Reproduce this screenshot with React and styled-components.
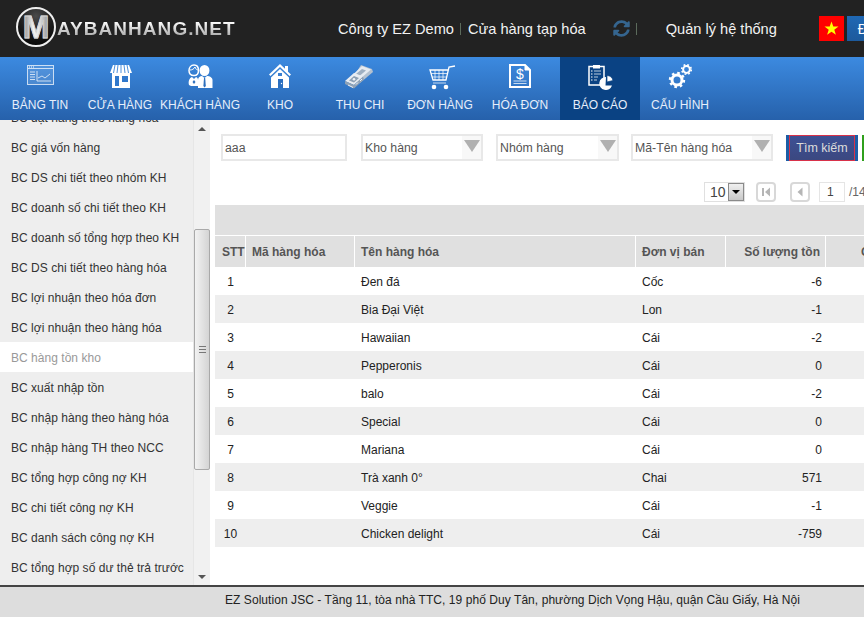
import React from 'react';
import styled, { createGlobalStyle } from 'styled-components';
import { FaSyncAlt } from 'react-icons/fa';

const GlobalStyle = createGlobalStyle`
  html, body {
    margin: 0;
    height: 100%;
    overflow: hidden;
    background: #fff;
    font-family: "Liberation Sans", Arial, sans-serif;
    font-size: 12px;
  }
`;

const Page = styled.div`
  width: 864px;
  height: 617px;
  display: flex;
  flex-direction: column;
  overflow: hidden;
`;

const Header = styled.header`
  height: 57px;
  flex: none;
  background: #222;
  display: flex;
  align-items: center;
  white-space: nowrap;
`;

const Logo = styled.div`
  width: 338px;
  flex: none;
  display: flex;
  align-items: center;
  padding-left: 16px;
  box-sizing: border-box;
`;

const LogoBadge = styled.span`
  width: 40px;
  height: 40px;
  box-sizing: border-box;
  flex: none;
  margin-bottom: 3px;
  border: 2px solid #eee;
  border-radius: 50%;
  background: radial-gradient(circle at 50% 20%, #4a4a4a 0%, #1c1c1c 50%, #000 100%);
  display: flex;
  align-items: center;
  justify-content: center;
  font-size: 32px;
  font-weight: bold;
`;

const LogoBadgeLetter = styled.span`
  background: linear-gradient(90deg, #8a8a8a 0%, #f2f2f2 40%, #e6e6e6 60%, #8f8f8f 100%);
  -webkit-background-clip: text;
  background-clip: text;
  color: transparent;
  -webkit-text-stroke: 0.8px #d4d4d4;
`;

const LogoText = styled.span`
  margin-left: 1px;
  font-size: 19px;
  font-weight: bold;
  letter-spacing: 1.05px;
  background: linear-gradient(180deg, #fafafa 20%, #a8a8a8 85%);
  -webkit-background-clip: text;
  background-clip: text;
  color: transparent;
`;

const TopLink = styled.span`
  flex: none;
  font-size: 14.6px;
  color: #f2f2f2;
  margin-left: ${props => props.$left || 0}px;
`;

const TopDivider = styled.span`
  flex: none;
  width: 1px;
  height: 12px;
  background: #5c6b5c;
  margin-left: ${props => props.$left}px;
`;

const SyncIcon = styled(FaSyncAlt)`
  color: #35658f;
  font-size: 17px;
  margin-left: 27px;
  flex: none;
`;

const Flag = styled.svg`
  width: 25px;
  height: 25px;
  flex: none;
  margin-left: 42px;
`;

const LogoutButton = styled.button`
  width: 80px;
  height: 25px;
  flex: none;
  margin-left: 3px;
  border: none;
  padding: 0 0 0 11px;
  text-align: left;
  color: #fff;
  font: 14px "Liberation Sans", Arial, sans-serif;
  background: linear-gradient(180deg, #1f68b4, #1d5a9c);
`;

const Nav = styled.nav`
  height: 63px;
  flex: none;
  display: flex;
  background: linear-gradient(180deg, #3c8ae0 0%, #2661ab 100%);
`;

const NavItem = styled.div`
  width: 80px;
  flex: none;
  padding-top: 5px;
  box-sizing: border-box;
  display: flex;
  flex-direction: column;
  align-items: center;
  gap: 8px;
  background: ${props => props.$active ? '#0a4283' : 'transparent'};
`;

const NavIcon = styled.svg`
  width: 32px;
  height: 28px;
  flex: none;
`;

const NavLabel = styled.span`
  font-size: 12px;
  line-height: 14px;
  color: #e6eefa;
  white-space: nowrap;
`;

const Body = styled.div`
  flex: 1;
  min-height: 0;
  display: flex;
`;

const Sidebar = styled.aside`
  width: 193px;
  flex: none;
  background: #eee;
  overflow: hidden;
`;

const SideList = styled.ul`
  list-style: none;
  margin: -18px 0 0;
  padding: 0;
`;

const SideRow = styled.li`
  height: 30px;
  line-height: 32px;
  padding-left: 11px;
  white-space: nowrap;
  letter-spacing: 0.03px;
  color: ${props => props.$active ? '#999' : '#333'};
  background: ${props => props.$active ? '#fff' : 'transparent'};
`;

const ScrollTrack = styled.div`
  width: 17px;
  flex: none;
  display: flex;
  flex-direction: column;
  background: #f1f1f1;
  border-left: 1px solid #e6e6e6;
  box-sizing: border-box;
`;

const ScrollArrow = styled.div`
  height: 17px;
  flex: none;
  display: flex;
  align-items: center;
  justify-content: center;
  margin-top: ${props => props.$bottom ? 'auto' : '0'};

  &::before {
    content: '';
    border-left: 4px solid transparent;
    border-right: 4px solid transparent;
    ${props => props.$bottom ? 'border-top: 4px solid #555;' : 'border-bottom: 4px solid #555;'}
  }
`;

const ScrollThumb = styled.div`
  height: 241px;
  flex: none;
  margin-top: 92px;
  box-sizing: border-box;
  border: 1px solid #a9a9a9;
  border-radius: 2px;
  background: linear-gradient(90deg, #f2f2f2, #d4d4d4);
  display: flex;
  align-items: center;
  justify-content: center;
`;

const ScrollGrip = styled.div`
  width: 7px;
  height: 5px;
  border-top: 1px solid #777;
  border-bottom: 1px solid #777;
  position: relative;

  &::after {
    content: '';
    position: absolute;
    left: 0;
    right: 0;
    top: 2px;
    height: 1px;
    background: #777;
  }
`;

const Main = styled.main`
  flex: 1;
  min-width: 0;
  margin-left: 5px;
  overflow: hidden;
`;

const Filters = styled.div`
  display: flex;
  align-items: flex-start;
  height: 62px;
  padding: 14px 0 0 6px;
  box-sizing: border-box;
  width: 700px;
`;

const Field = styled.div`
  width: ${props => props.$width}px;
  height: 27px;
  margin-right: ${props => props.$gap}px;
  flex: none;
  box-sizing: border-box;
  border: 2px solid #e8e8e8;
  display: flex;
  align-items: center;
  padding-left: 2px;
  color: #555;
  font-size: 12.3px;
  background: #fff;
  position: relative;
`;

const FieldArrow = styled.span`
  position: absolute;
  right: 0;
  top: 0;
  bottom: 0;
  width: 19px;
  background: #f8f8f8;

  &::after {
    content: '';
    position: absolute;
    top: 4px;
    left: 2px;
    border-left: 8px solid transparent;
    border-right: 8px solid transparent;
    border-top: 12px solid #b0b0b0;
  }
`;

const SearchWrap = styled.div`
  width: 72px;
  height: 26px;
  flex: none;
  margin-top: 1px;
  box-sizing: border-box;
  padding: 0 3px;
  background: #1c5da6;
`;

const SearchButton = styled.button`
  width: 100%;
  height: 100%;
  padding: 0;
  box-sizing: border-box;
  border: 1px solid #d8324a;
  background: linear-gradient(180deg, #3d5095, #3b4880);
  color: #dcdcdc;
  font: 12.5px "Liberation Sans", Arial, sans-serif;
`;

const ExportButton = styled.button`
  width: 60px;
  height: 26px;
  flex: none;
  margin: 1px 0 0 4px;
  border: none;
  background: #2fa01c;
`;

const Pager = styled.div`
  display: flex;
  align-items: center;
  height: 20px;
  margin-bottom: 3px;
  margin-left: 489px;
  width: 300px;
  color: #666;
`;

const PageSize = styled.div`
  width: 41px;
  height: 20px;
  flex: none;
  box-sizing: border-box;
  border: 1px solid #e0e0e0;
  display: flex;
  align-items: center;
  justify-content: space-between;
  padding-left: 5px;
  font-size: 14px;
  color: #444;
`;

const PageSizeArrow = styled.span`
  width: 16px;
  height: 18px;
  box-sizing: border-box;
  border: 1px solid #8a8a8a;
  background: linear-gradient(180deg, #f0f0f0, #c8c8c8);
  display: flex;
  align-items: center;
  justify-content: center;

  &::after {
    content: '';
    border-left: 4px solid transparent;
    border-right: 4px solid transparent;
    border-top: 4px solid #000;
  }
`;

const PageButton = styled.span`
  width: 20px;
  height: 20px;
  flex: none;
  box-sizing: border-box;
  margin-left: ${props => props.$left}px;
  border: 2px solid #d8d8d8;
  border-radius: 4px;
  display: flex;
  align-items: center;
  justify-content: center;
  background: #fff;
`;

const PageInput = styled.span`
  width: 26px;
  height: 20px;
  flex: none;
  box-sizing: border-box;
  margin-left: 9px;
  border: 1px solid #e5e5e5;
  padding-left: 7px;
  line-height: 18px;
  color: #444;
`;

const PageTotal = styled.span`
  margin-left: 4px;
`;

const Table = styled.table`
  width: 800px;
  table-layout: fixed;
  border-collapse: separate;
  border-spacing: 0;
`;

const Band = styled.th`
  height: 30px;
  padding: 0;
  background: #e0e0e0;
  border-bottom: 1px solid #fff;
`;

const Th = styled.th`
  height: 31px;
  padding: 1px ${props => props.$right ? '5px' : '6px'} 0 ${props => props.$left ?? 6}px;
  box-sizing: border-box;
  background: #e0e0e0;
  border-right: 1px solid #fff;
  color: #555;
  font-size: 12px;
  font-weight: bold;
  white-space: nowrap;
  text-align: ${props => props.$align || 'left'};
`;

const Tr = styled.tr`
  background: ${props => props.$even ? '#eee' : '#fff'};
`;

const Td = styled.td`
  height: 28px;
  padding: 2px ${props => props.$right ? '4px' : '6px'} 0 6px;
  box-sizing: border-box;
  color: #222;
  white-space: nowrap;
  text-align: left;
`;

const NumberTd = styled(Td)`
  text-align: right;
  padding-left: 0;
`;

const IndexTd = styled(Td)`
  text-align: center;
  padding-left: 0;
  padding-right: 0;
`;

const Footer = styled.footer`
  height: 32px;
  flex: none;
  box-sizing: border-box;
  border-top: 2px solid #444;
  background: #ddd;
  padding-left: 225px;
  line-height: 26px;
  letter-spacing: 0.06px;
  color: #222;
  white-space: nowrap;
`;

const W = '#fff';
const Soft = 'rgba(255,255,255,.72)';

const icons = {
  dashboard: (
    <>
      <rect x="3.5" y="3.5" width="26" height="19" fill="rgba(255,255,255,.12)" stroke={Soft} />
      <path d="M4 6.5h25" stroke={Soft} />
      <path d="M5 5h1M7 5h1M9 5h1" stroke={W} />
      <path d="M6 10h5M6 12.5h5M6 15h5M6 17.5h5" stroke={Soft} strokeWidth="1.2" />
      <path d="M13 9v10M13 19h14M14 16l4-2 3 2 5-4" fill="none" stroke={Soft} />
    </>
  ),
  store: (
    <>
      <path d="M9 3h16l3 8H6z" fill={W} />
      <path d="M11 3l-1.5 8M14 3l-1 8M17 3v8M20 3l1 8M23 3l1.5 8" stroke="#3a84d8" strokeWidth=".9" />
      <path d="M8 11h18v15H8z" fill={W} />
      <path d="M11 14h4v10h-4zM18 14h6v6h-6z" fill="#3078cc" />
    </>
  ),
  people: (
    <>
      <path d="M20.5 3a4.5 5 0 0 1 0 11 4.5 5 0 0 1 0-11zM14 26v-8c0-2.5 2-4 4-4l2.5 2 2.5-2c2.5 0 5.5 1.5 5.5 4v8z" fill={W} />
      <path d="M20 16h1.2l.6 8-1.2 1.5-1.2-1.5z" fill="#2f70bd" />
      <path d="M10 3c3 0 4.5 2.5 4.5 5.5s-1.5 5-4.5 5-5-2-5-5S7 3 10 3z" fill="none" stroke={W} strokeWidth="1.5" />
      <path d="M6 8c2 0 4-1 5-3 .5 2 2 3 3 3" fill="none" stroke={W} />
      <path d="M5 23c-1-3 0-7 3-8l2 2 2-2c1.5.5 2 1.5 2 3v6H7z" fill={W} />
      <path d="M10 18l1.5 2-1.5 2-1.5-2z" fill="#2f70bd" />
    </>
  ),
  house: (
    <>
      <path d="M16 2l5 4.8V4h3v5.700l3 2.900-1.500 1.400L16 5 6.500 14 5 12.600z" fill={W} />
      <path d="M16 7l9 8.500V26H7V15.500z" fill={W} />
      <path d="M14 11h4v3h-4z" fill="#3a7fd0" />
      <path d="M14 17h5v9h-5z" fill="#2b6fc0" />
      <circle cx="17.5" cy="21.5" r=".7" fill={W} />
    </>
  ),
  money: (
    <>
      <path d="M17 3l11 4 1 3-13 11-8-4z" fill="#b4c1cf" />
      <path d="M18 4l9 3.500-11 9.500-8-3.500z" fill="#e6ebf1" />
      <path d="M18 7l4 1.500-6 5-4-1.500z" fill="#9fb0c2" />
      <path d="M1 19l9-8 9 3.500-9 8.500z" fill="#e9edf2" />
      <path d="M5 18.500l5-4.500 5 2-5 4.500z" fill="#8ea1b5" />
      <path d="M1 19l9 4 9-8.500 1 3-10 9-9-4.500z" fill="#8fa2b6" />
      <path d="M4 23l5 2.500M12 22.500l2-2M16 19l2-2" stroke="#eef2f6" />
      <circle cx="10" cy="17.2" r="1.3" fill="#eef2f6" />
    </>
  ),
  cart: (
    <>
      <path d="M31 4l-6 1-3 13H9L6 8h18" fill="none" stroke={W} strokeWidth="1.3" />
      <path d="M7 11.5h16M8 15h14M11 8v10M15 8v10M19 8v10" fill="none" stroke={Soft} />
      <path d="M9 21h13" stroke={Soft} />
      <circle cx="10" cy="25" r="2.3" fill={W} />
      <circle cx="22" cy="25" r="2.3" fill={W} />
    </>
  ),
  invoice: (
    <>
      <path d="M6 3h15l5 5v17H6z" fill="none" stroke={W} strokeWidth="2" />
      <path d="M21 3v5h5" fill={W} stroke={W} />
      <text x="16" y="16.5" textAnchor="middle" fontSize="14" fontFamily="Liberation Sans, sans-serif" fill={W}>$</text>
      <path d="M9.5 19h13M9.5 21.5h13" stroke={Soft} />
    </>
  ),
  report: (
    <>
      <path d="M5 4.5h15V23H5z" fill="#0a4283" stroke={W} strokeWidth="1.5" />
      <path d="M9 3h7v3.5H9z" fill={W} />
      <path d="M7 9h1.5M7 12h1.5M7 15h1.5M7 18h1.5" stroke={W} strokeWidth="1.2" />
      <path d="M10 9h7M10 12h7M10 15h4M10 18h3" stroke={Soft} />
      <path d="M22 15a6.5 6.5 0 1 0 6 8.5h-6.5z" fill={W} />
      <path d="M23 13.5v6.5l6-1.5a6.5 6.5 0 0 0-6-5z" fill={W} stroke="#0a4283" strokeWidth=".7" />
    </>
  ),
  gears: (
    <>
      <circle cx="13" cy="18" r="5" fill="none" stroke={W} strokeWidth="3" />
      <circle cx="13" cy="18" r="7" fill="none" stroke={W} strokeWidth="2.4" strokeDasharray="2.6 2.9" />
      <circle cx="22.5" cy="7.5" r="3.4" fill="none" stroke={W} strokeWidth="2" />
      <circle cx="22.5" cy="7.5" r="4.8" fill="none" stroke={W} strokeWidth="1.6" strokeDasharray="1.8 2" />
    </>
  ),
};

const navItems = [
  ['dashboard', 'BẢNG TIN'],
  ['store', 'CỬA HÀNG'],
  ['people', 'KHÁCH HÀNG'],
  ['house', 'KHO'],
  ['money', 'THU CHI'],
  ['cart', 'ĐƠN HÀNG'],
  ['invoice', 'HÓA ĐƠN'],
  ['report', 'BÁO CÁO'],
  ['gears', 'CẤU HÌNH'],
];

const reports = [
  'BC đặt hàng theo hàng hóa',
  'BC giá vốn hàng',
  'BC DS chi tiết theo nhóm KH',
  'BC doanh số chi tiết theo KH',
  'BC doanh số tổng hợp theo KH',
  'BC DS chi tiết theo hàng hóa',
  'BC lợi nhuận theo hóa đơn',
  'BC lợi nhuận theo hàng hóa',
  'BC hàng tồn kho',
  'BC xuất nhập tồn',
  'BC nhập hàng theo hàng hóa',
  'BC nhập hàng TH theo NCC',
  'BC tổng hợp công nợ KH',
  'BC chi tiết công nợ KH',
  'BC danh sách công nợ KH',
  'BC tổng hợp số dư thẻ trả trước',
];

const rows = [
  ['Đen đá', 'Cốc', '-6'],
  ['Bia Đại Việt', 'Lon', '-1'],
  ['Hawaiian', 'Cái', '-2'],
  ['Pepperonis', 'Cái', '0'],
  ['balo', 'Cái', '-2'],
  ['Special', 'Cái', '0'],
  ['Mariana', 'Cái', '0'],
  ['Trà xanh 0°', 'Chai', '571'],
  ['Veggie', 'Cái', '-1'],
  ['Chicken delight', 'Cái', '-759'],
];

export default function App() {
  return (
    <Page>
      <GlobalStyle />
      <Header>
        <Logo>
          <LogoBadge><LogoBadgeLetter>M</LogoBadgeLetter></LogoBadge>
          <LogoText>AYBANHANG.NET</LogoText>
        </Logo>
        <TopLink>Công ty EZ Demo</TopLink>
        <TopDivider $left={6} />
        <TopLink $left={7}>Cửa hàng tạp hóa</TopLink>
        <SyncIcon />
        <TopDivider $left={6} />
        <TopLink $left={29}>Quản lý hệ thống</TopLink>
        <Flag viewBox="0 0 25 25">
          <rect width="25" height="25" fill="#f00" />
          <path d="M12.5 5.5l1.8 5h5.2l-4.2 3.2 1.6 5.1-4.400-3.100-4.400 3.100 1.600-5.100-4.200-3.200h5.200z" fill="#ff0" />
        </Flag>
        <LogoutButton>Đăng xuất</LogoutButton>
      </Header>
      <Nav>
        {navItems.map(([icon, label]) => (
          <NavItem key={label} $active={label === 'BÁO CÁO'}>
            <NavIcon viewBox="0 0 32 28">{icons[icon]}</NavIcon>
            <NavLabel>{label}</NavLabel>
          </NavItem>
        ))}
      </Nav>
      <Body>
        <Sidebar>
          <SideList>
            {reports.map(name => (
              <SideRow key={name} $active={name === 'BC hàng tồn kho'}>{name}</SideRow>
            ))}
          </SideList>
        </Sidebar>
        <ScrollTrack>
          <ScrollArrow />
          <ScrollThumb><ScrollGrip /></ScrollThumb>
          <ScrollArrow $bottom />
        </ScrollTrack>
        <Main>
          <Filters>
            <Field $width={126} $gap={14}>aaa</Field>
            <Field $width={122} $gap={13}>Kho hàng<FieldArrow /></Field>
            <Field $width={123} $gap={12}>Nhóm hàng<FieldArrow /></Field>
            <Field $width={142} $gap={13}>Mã-Tên hàng hóa<FieldArrow /></Field>
            <SearchWrap><SearchButton>Tìm kiếm</SearchButton></SearchWrap>
            <ExportButton />
          </Filters>
          <Pager>
            <PageSize>10<PageSizeArrow /></PageSize>
            <PageButton $left={11}>
              <svg width="12" height="12" viewBox="0 0 12 12"><path d="M2 2h2v8H2zM10 1.5v9L5 6z" fill="#b5b5b5" /></svg>
            </PageButton>
            <PageButton $left={14}>
              <svg width="12" height="12" viewBox="0 0 12 12"><path d="M8.5 1.5v9L3.5 6z" fill="#b5b5b5" /></svg>
            </PageButton>
            <PageInput>1</PageInput>
            <PageTotal>/14</PageTotal>
          </Pager>
          <Table>
            <colgroup>
              <col width="31" />
              <col width="109" />
              <col width="281" />
              <col width="90" />
              <col width="100" />
              <col width="189" />
            </colgroup>
            <thead>
              <tr><Band colSpan="6" /></tr>
              <tr>
                <Th $left={7}>STT</Th>
                <Th>Mã hàng hóa</Th>
                <Th>Tên hàng hóa</Th>
                <Th>Đơn vị bán</Th>
                <Th $align="right" $right>Số lượng tồn</Th>
                <Th $left={35}>Giá vốn</Th>
              </tr>
            </thead>
            <tbody>
              {rows.map((row, i) => (
                <Tr key={row[0]} $even={i % 2 === 1}>
                  <IndexTd>{i + 1}</IndexTd>
                  <Td />
                  <Td>{row[0]}</Td>
                  <Td>{row[1]}</Td>
                  <NumberTd $right>{row[2]}</NumberTd>
                  <Td />
                </Tr>
              ))}
            </tbody>
          </Table>
        </Main>
      </Body>
      <Footer>EZ Solution JSC - Tầng 11, tòa nhà TTC, 19 phố Duy Tân, phường Dịch Vọng Hậu, quận Cầu Giấy, Hà Nội</Footer>
    </Page>
  );
}
